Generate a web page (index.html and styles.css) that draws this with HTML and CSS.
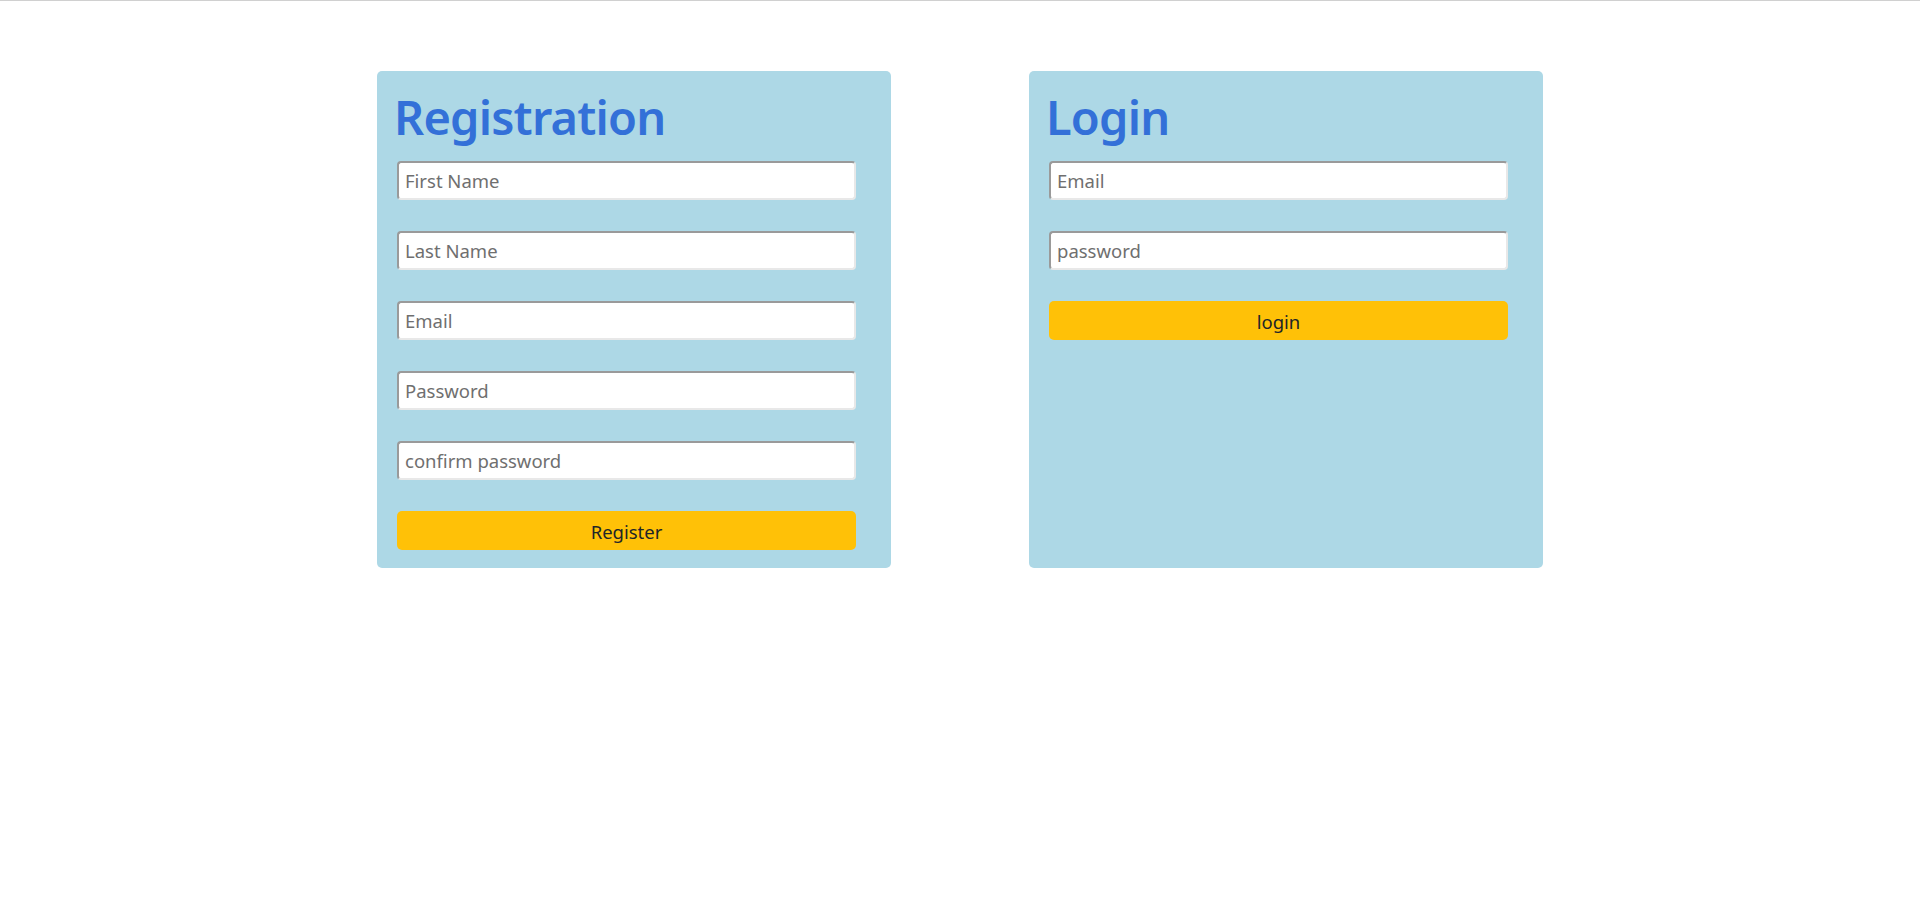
FILE: index.html
```html
<!DOCTYPE html>
<html lang="en">
<head>
<meta charset="utf-8">
<title>Registration / Login</title>
<link rel="stylesheet" href="styles.css">
</head>
<body>
<main class="forms">
  <form class="card">
    <h1 class="card-title">Registration</h1>
    <input class="field" type="text" placeholder="First Name">
    <input class="field" type="text" placeholder="Last Name">
    <input class="field" type="email" placeholder="Email">
    <input class="field" type="password" placeholder="Password">
    <input class="field" type="password" placeholder="confirm password">
    <button class="btn" type="button">Register</button>
  </form>
  <form class="card">
    <h1 class="card-title">Login</h1>
    <input class="field" type="email" placeholder="Email">
    <input class="field" type="password" placeholder="password">
    <button class="btn" type="button">login</button>
  </form>
</main>
</body>
</html>
```

FILE: styles.css
```css
html, body {
  margin: 0;
  padding: 0;
  background: #ffffff;
}
body {
  border-top: 1px solid #d0d0d0;
  font-family: "Noto Sans", "Open Sans", sans-serif;
}
.forms {
  display: flex;
  justify-content: center;
  align-items: stretch;
  gap: 138px;
  padding-top: 70px;
}
.card {
  width: 514px;
  box-sizing: border-box;
  background: #add8e6;
  border-radius: 5px;
  padding: 16px 35px 18px 20px;
  display: flex;
  flex-direction: column;
}
.card-title {
  margin: 0 0 14px -3px;
  font-size: 47px;
  line-height: 60px;
  font-weight: 600;
  color: #3370d8;
  letter-spacing: -0.8px;
}
.field {
  height: 39px;
  box-sizing: border-box;
  margin: 0 0 31px;
  padding: 0 6px;
  border: 2px solid #e8e8e8;
  border-top-color: #9a9a9a;
  border-left-color: #9a9a9a;
  border-radius: 4px;
  background: #fff;
  font-family: inherit;
  font-size: 18.5px;
  color: #333;
}
.field::placeholder {
  color: #6f6f6f;
}
.btn {
  height: 39px;
  border: none;
  border-radius: 5px;
  background: #ffc107;
  color: #212529;
  font-family: inherit;
  font-size: 18.5px;
  padding: 2px 0 0;
}
```
